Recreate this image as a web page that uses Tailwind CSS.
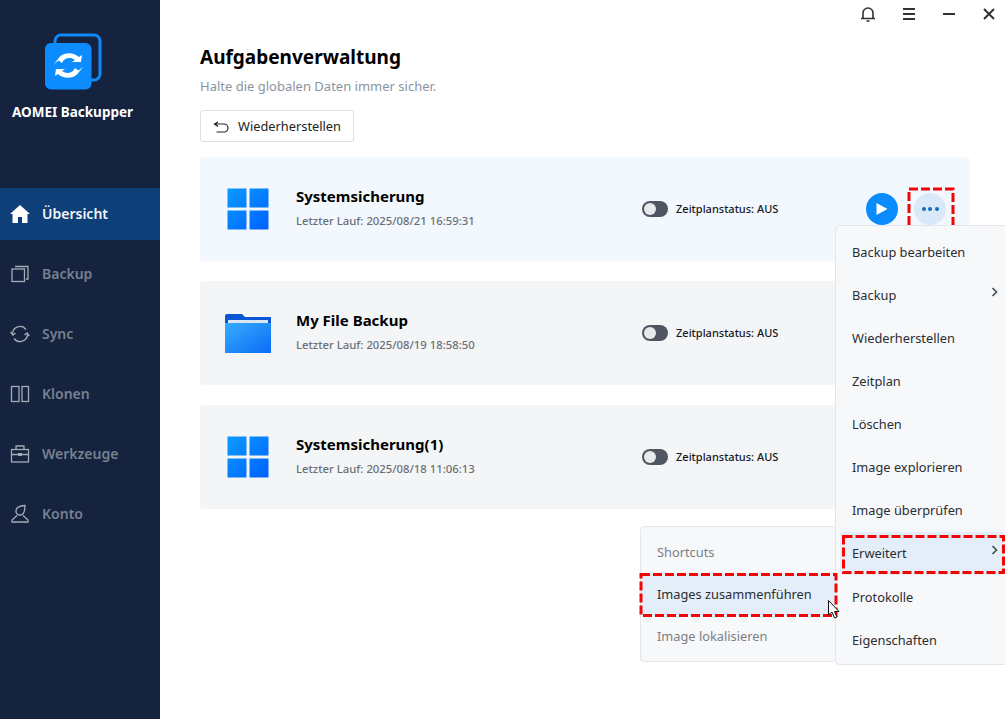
<!DOCTYPE html>
<html lang="de">
<head>
  <meta charset="UTF-8">
  <title>AOMEI Backupper</title>
  <script src="https://cdn.jsdelivr.net/npm/@tailwindcss/browser@4"></script>
</head>
<body class="bg-white overflow-hidden font-['Noto_Sans',sans-serif]">
<div class="relative w-[1005px] h-[719px] flex overflow-hidden">

  <!-- sidebar -->
  <aside class="w-[160px] h-full bg-[#15233f] flex flex-col shrink-0">
    <div class="h-[188px] pr-[15px] flex flex-col items-center">
      <svg class="mt-[33px] ml-[3px]" width="58" height="58" viewBox="0 0 58 58">
        <rect x="10" y="2" width="45" height="45" rx="6" fill="none" stroke="#1088f5" stroke-width="3"/>
        <rect x="0" y="10" width="46.500" height="46.500" rx="6" fill="#0d8cff"/>
        <path d="M9 31 L15 23.500 C20 19 29 19 34 24 L37 22 L36 29 L27 29 L30 27 C25 23.500 19 25 17 30 L13.500 27.500 Z" fill="#fff"/>
        <path d="M38 34 L32 41.500 C27 46 18 46 13 41 L10 43 L11 36 L20 36 L17 38 C22 41.500 28 40 30 35 L33.500 37.500 Z" fill="#fff"/>
      </svg>
      <div class="mt-[11px] text-[13.500px] leading-[20px] font-bold text-white">AOMEI Backupper</div>
    </div>
    <nav class="flex flex-col gap-[8px] text-[14px] font-semibold text-[#76818f]">
      <a class="h-[52px] bg-[#0e3f78] flex items-center gap-[12px] pl-[10px] pb-[1px] text-[#f2f5f8]">
        <svg width="20" height="18" viewBox="0 0 20 18" fill="#fff"><path d="M10 0 L20 9 L17.500 9 L17.500 18 L12 18 L12 12 L8 12 L8 18 L2.500 18 L2.500 9 L0 9 Z"/></svg>
        Übersicht
      </a>
      <a class="h-[52px] flex items-center gap-[12px] pl-[10px] pb-[1px]">
        <svg width="20" height="20" viewBox="0 0 20 20" fill="none" stroke="#a4abb6" stroke-width="1.300"><rect x="2" y="5" width="12.500" height="12.500"/><path d="M5 2.500 H18 V15 H16"/></svg>
        Backup
      </a>
      <a class="h-[52px] flex items-center gap-[12px] pl-[10px] pb-[1px]">
        <svg width="20" height="20" viewBox="0 0 20 20" fill="none" stroke="#a4abb6" stroke-width="1.300"><path d="M2.500 10 A7.500 7.500 0 0 1 16 5.500 M17.500 10 A7.500 7.500 0 0 1 4 14.500"/><path d="M0.500 8 L3 11 L5.500 9 M19.500 12 L17 9 L14.500 11"/></svg>
        Sync
      </a>
      <a class="h-[52px] flex items-center gap-[12px] pl-[10px] pb-[1px]">
        <svg width="20" height="20" viewBox="0 0 20 20" fill="none" stroke="#a4abb6" stroke-width="1.300"><rect x="1.500" y="2.500" width="7.500" height="15"/><rect x="12" y="2.500" width="6.500" height="15"/></svg>
        Klonen
      </a>
      <a class="h-[52px] flex items-center gap-[12px] pl-[10px] pb-[1px]">
        <svg width="20" height="20" viewBox="0 0 20 20" fill="none" stroke="#a4abb6" stroke-width="1.300"><rect x="1.500" y="5.500" width="17" height="12.500"/><path d="M6 5.500 V2 H14 V5.500 M1.500 10.500 H18.500"/><rect x="8" y="9" width="4" height="3" fill="#a4abb6" stroke="none"/></svg>
        Werkzeuge
      </a>
      <a class="h-[52px] flex items-center gap-[12px] pl-[10px] pb-[1px]">
        <svg width="20" height="20" viewBox="0 0 20 20" fill="none" stroke="#a4abb6" stroke-width="1.300"><path d="M6 7 C6 4 9 1.500 15 1.500 C15 6 14 11 10 11 C7.500 11 6 9.500 6 7 Z"/><path d="M7 11.500 L2 16 V18 H18 V16 L13 11.500"/></svg>
        Konto
      </a>
    </nav>
  </aside>

  <!-- main -->
  <main class="flex-1 flex flex-col pl-[40px] pr-[35px]">
    <h1 class="mt-[44px] text-[19px] leading-[26px] font-bold text-black">Aufgabenverwaltung</h1>
    <p class="mt-[6px] text-[13px] leading-[20px] text-[#8a94a0]">Halte die globalen Daten immer sicher.</p>
    <button class="mt-[14px] w-[154px] h-[32px] pt-[1px] flex items-center justify-center gap-[9px] bg-white border border-[#dcdfe3] rounded-[3px] text-[12.800px] text-[#222]">
      <svg width="16" height="12" viewBox="0 0 16 12" fill="none" stroke="#222" stroke-width="1.200"><path d="M5 1 L1.500 3 L5 5.500 M2 3 H11 A4 4 0 0 1 11 11 H3.500"/></svg>
      Wiederherstellen
    </button>

    <div class="mt-[15px] flex flex-col gap-[20px]">
      <div class="h-[104px] bg-[#f2f8fe] rounded-[4px] flex items-center">
        <svg class="ml-[27px] shrink-0" width="42" height="42" viewBox="0 0 42 42">
          <defs><linearGradient id="win" x1="0" y1="0" x2="1" y2="1"><stop offset="0" stop-color="#0a9bff"/><stop offset="1" stop-color="#0061ff"/></linearGradient></defs>
          <path d="M0.500 0.500 H19.500 V19.500 H0.500 Z M22.500 0.500 H41.500 V19.500 H22.500 Z M0.500 22.500 H19.500 V41.500 H0.500 Z M22.500 22.500 H41.500 V41.500 H22.500 Z" fill="url(#win)"/>
        </svg>
        <div class="ml-[27px] w-[346px] pb-[4px]">
          <div class="text-[15px] leading-[20px] font-bold text-black">Systemsicherung</div>
          <div class="mt-[7px] text-[11.300px] leading-[16px] font-medium text-[#6c6f75]">Letzter Lauf: 2025/08/21 16:59:31</div>
        </div>
        <div class="flex items-center gap-[8px]">
          <span class="w-[26px] h-[16px] rounded-full bg-[#4f5661] relative"><span class="absolute left-[2px] top-[2px] w-[12px] h-[12px] rounded-full bg-[#e8e9eb]"></span></span>
          <span class="text-[11px] font-medium text-[#15181d]">Zeitplanstatus: AUS</span>
        </div>
      </div>

      <div class="h-[104px] bg-[#f4f5f7] rounded-[4px] flex items-center">
        <svg class="ml-[25px] shrink-0" width="46" height="39" viewBox="0 0 46 39">
          <defs><linearGradient id="fold" x1="0" y1="0" x2="1" y2="1"><stop offset="0" stop-color="#38acff"/><stop offset="1" stop-color="#0a6cf5"/></linearGradient></defs>
          <path d="M0 2 Q0 0 2 0 H17 L20 3 H46 V12 H0 Z" fill="#0a56d6"/>
          <path d="M0 9 H46 V39 H0 Z" fill="url(#fold)"/>
          <rect x="3" y="6" width="40" height="3" fill="#dbe6f2"/>
        </svg>
        <div class="ml-[25px] w-[346px] pb-[4px]">
          <div class="text-[15px] leading-[20px] font-bold text-black">My File Backup</div>
          <div class="mt-[7px] text-[11.300px] leading-[16px] font-medium text-[#6c6f75]">Letzter Lauf: 2025/08/19 18:58:50</div>
        </div>
        <div class="flex items-center gap-[8px]">
          <span class="w-[26px] h-[16px] rounded-full bg-[#4f5661] relative"><span class="absolute left-[2px] top-[2px] w-[12px] h-[12px] rounded-full bg-[#e8e9eb]"></span></span>
          <span class="text-[11px] font-medium text-[#15181d]">Zeitplanstatus: AUS</span>
        </div>
      </div>

      <div class="h-[104px] bg-[#f4f5f7] rounded-[4px] flex items-center">
        <svg class="ml-[27px] shrink-0" width="42" height="42" viewBox="0 0 42 42">
          <path d="M0.500 0.500 H19.500 V19.500 H0.500 Z M22.500 0.500 H41.500 V19.500 H22.500 Z M0.500 22.500 H19.500 V41.500 H0.500 Z M22.500 22.500 H41.500 V41.500 H22.500 Z" fill="url(#win)"/>
        </svg>
        <div class="ml-[27px] w-[346px] pb-[4px]">
          <div class="text-[15px] leading-[20px] font-bold text-black">Systemsicherung(1)</div>
          <div class="mt-[7px] text-[11.300px] leading-[16px] font-medium text-[#6c6f75]">Letzter Lauf: 2025/08/18 11:06:13</div>
        </div>
        <div class="flex items-center gap-[8px]">
          <span class="w-[26px] h-[16px] rounded-full bg-[#4f5661] relative"><span class="absolute left-[2px] top-[2px] w-[12px] h-[12px] rounded-full bg-[#e8e9eb]"></span></span>
          <span class="text-[11px] font-medium text-[#15181d]">Zeitplanstatus: AUS</span>
        </div>
      </div>
    </div>
  </main>

  <!-- window buttons -->
  <div class="absolute top-[6px] left-[860px] flex items-center gap-[26px]">
    <svg width="16" height="16" viewBox="0 0 16 16" fill="none" stroke="#2f3236" stroke-width="1.600"><path d="M3 12 V7 A5 5 0 0 1 13 7 V12 M1 12.500 H15"/><path d="M6.500 15 H9.500" stroke-width="1.500"/></svg>
    <svg width="14" height="14" viewBox="0 0 14 14" stroke="#2f3236" stroke-width="2"><path d="M1 2 H13 M1 7 H13 M1 12 H13"/></svg>
    <svg width="14" height="14" viewBox="0 0 14 14" stroke="#2f3236" stroke-width="2"><path d="M1 7 H13"/></svg>
    <svg width="14" height="14" viewBox="0 0 14 14" stroke="#2f3236" stroke-width="2"><path d="M2 2 L12 12 M12 2 L2 12"/></svg>
  </div>

  <!-- actions on first row -->
  <div class="absolute left-[866px] top-[193px] w-[32px] h-[32px] rounded-full bg-[#0a8cff] flex items-center justify-center">
    <svg width="12" height="14" viewBox="0 0 12 14" fill="#fff"><path d="M0.500 1 L11.500 7 L0.500 13 Z"/></svg>
  </div>
  <div class="absolute left-[914px] top-[193px] w-[32px] h-[32px] rounded-full bg-[#d9e9f8] flex items-center justify-center gap-[2.500px]">
    <span class="w-[4px] h-[4px] rounded-full bg-[#0f6cc6]"></span><span class="w-[4px] h-[4px] rounded-full bg-[#0f6cc6]"></span><span class="w-[4px] h-[4px] rounded-full bg-[#0f6cc6]"></span>
  </div>
  <svg class="absolute left-[907px] top-[187px]" width="48" height="44" fill="none" stroke="#f00606" stroke-width="3" stroke-dasharray="9 3"><rect x="2" y="2" width="44" height="40"/></svg>

  <!-- context menu -->
  <div class="absolute left-[835px] top-[225px] w-[175px] h-[440px] pt-[5px] bg-[#f7f8fa] border border-[#e4e6ea] rounded-[4px] text-[12.800px] text-[#2a2d33]">
    <div class="h-[43px] flex items-center pl-[16px]">Backup bearbeiten</div>
    <div class="h-[43px] flex items-center pl-[16px] relative">Backup<span class="absolute left-[155px] top-[13px]"><svg width="8" height="10" viewBox="0 0 8 10" fill="none" stroke="#4a4d52" stroke-width="1.700"><path d="M1.500 1 L5.500 5 L1.500 9"/></svg></span></div>
    <div class="h-[43px] flex items-center pl-[16px]">Wiederherstellen</div>
    <div class="h-[43px] flex items-center pl-[16px]">Zeitplan</div>
    <div class="h-[43px] flex items-center pl-[16px]">Löschen</div>
    <div class="h-[43px] flex items-center pl-[16px]">Image explorieren</div>
    <div class="h-[43px] flex items-center pl-[16px]">Image überprüfen</div>
    <div class="h-[43px] flex items-center relative bg-[#e3eef9] ml-[4px] mr-[5px] rounded-[3px] pl-[12px]">Erweitert<span class="absolute left-[151px] top-[13px]"><svg width="8" height="10" viewBox="0 0 8 10" fill="none" stroke="#4a4d52" stroke-width="1.700"><path d="M1.500 1 L5.500 5 L1.500 9"/></svg></span></div>
    <div class="h-[44px] pt-[1px] flex items-center pl-[16px]">Protokolle</div>
    <div class="h-[43px] flex items-center pl-[16px]">Eigenschaften</div>
  </div>
  <svg class="absolute left-[841px] top-[534px]" width="164" height="41" fill="none" stroke="#f00606" stroke-width="3" stroke-dasharray="9 3"><rect x="2.500" y="2.500" width="160" height="36"/></svg>

  <!-- sub menu -->
  <div class="absolute left-[640px] top-[526px] w-[196px] h-[136px] pt-[5px] bg-[#f7f8fa] border border-[#e4e6ea] rounded-[4px] text-[12.800px] text-[#7b7f86]">
    <div class="h-[42px] flex items-center pl-[16px]">Shortcuts</div>
    <div class="h-[42px] flex items-center pl-[16px] bg-[#e3eef9] text-[#2a2d33]">Images zusammenführen</div>
    <div class="h-[42px] flex items-center pl-[16px]">Image lokalisieren</div>
  </div>
  <svg class="absolute left-[639px] top-[572px]" width="199" height="46" fill="none" stroke="#f00606" stroke-width="3" stroke-dasharray="9 3"><rect x="2" y="2.500" width="195" height="41"/></svg>

  <!-- cursor -->
  <svg class="absolute left-[828px] top-[600px]" width="12" height="20" viewBox="0 0 12 20"><path d="M0.500 0.500 V15 L4 12 L6.500 18 L9 17 L6.500 11.500 L11 11.500 Z" fill="#fff" stroke="#111" stroke-width="1"/></svg>
</div>
</body>
</html>
